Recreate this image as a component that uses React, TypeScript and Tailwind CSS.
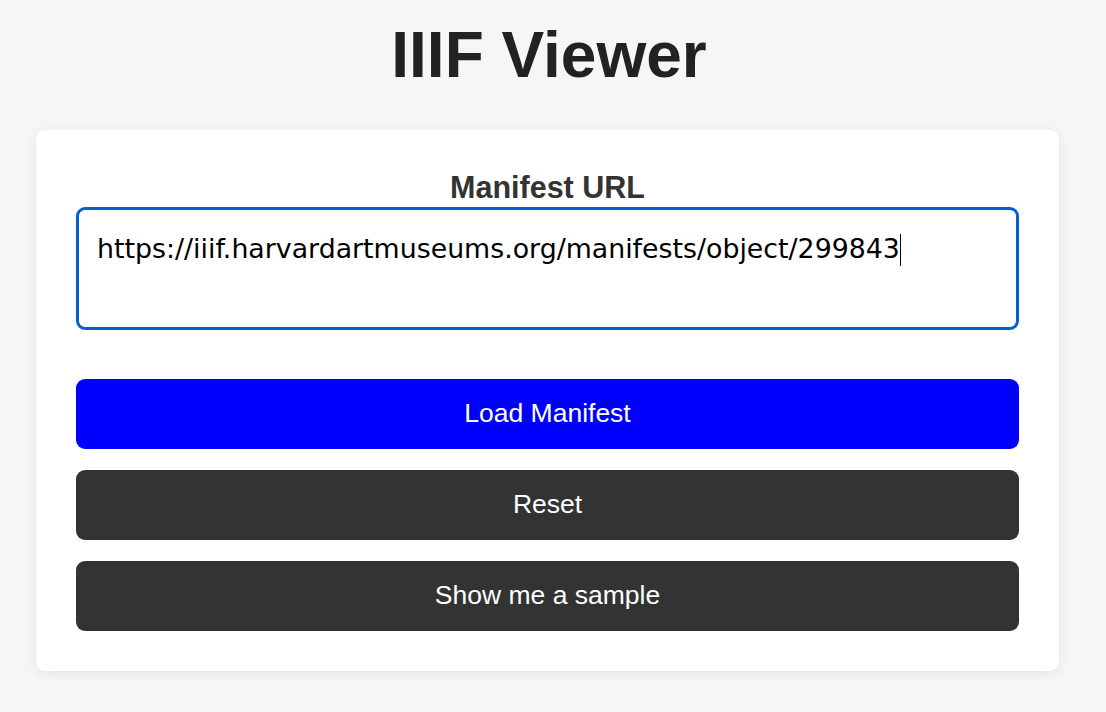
import { useState } from "react";

const SAMPLE = "https://iiif.harvardartmuseums.org/manifests/object/299843";

export default function App() {
  const [url, setUrl] = useState(SAMPLE);

  return (
    <div className="min-h-[712px] bg-[#f6f6f6] font-['Liberation_Sans',Arial,sans-serif]">
      <div className="w-[1095px] flex flex-col items-center">
        <h1 className="mt-[19px] ml-[3px] text-[64px] leading-[72px] font-bold text-[#222]">IIIF Viewer</h1>

        <div className="mt-[39px] w-[1023px] bg-white rounded-[9px] shadow-[0_2px_12px_rgba(0,0,0,0.08)] px-[40px] pt-[40px] pb-[40px] flex flex-col">
          <label className="text-center text-[30.5px] leading-[34px] font-bold text-[#333]">Manifest URL</label>

          <div className="mt-[3px] h-[123px] rounded-[9px] border-[3px] border-[#0560cf] px-[18px] pt-[23px]">
            <span className="font-['DejaVu_Sans',sans-serif] text-[26.8px] leading-[32px] text-black">{url}</span>
            <span className="inline-block w-[1.5px] h-[32px] bg-black align-[-8px]"></span>
          </div>

          <button
            onClick={() => setUrl(SAMPLE)}
            className="mt-[49px] h-[70px] rounded-[9px] bg-[#0000ff] text-white text-[26.5px]"
          >
            Load Manifest
          </button>
          <button
            onClick={() => setUrl("")}
            className="mt-[21px] h-[70px] rounded-[9px] bg-[#333] text-white text-[26.5px]"
          >
            Reset
          </button>
          <button
            onClick={() => setUrl(SAMPLE)}
            className="mt-[21px] h-[70px] rounded-[9px] bg-[#333] text-white text-[26.5px]"
          >
            Show me a sample
          </button>
        </div>
      </div>
    </div>
  );
}
